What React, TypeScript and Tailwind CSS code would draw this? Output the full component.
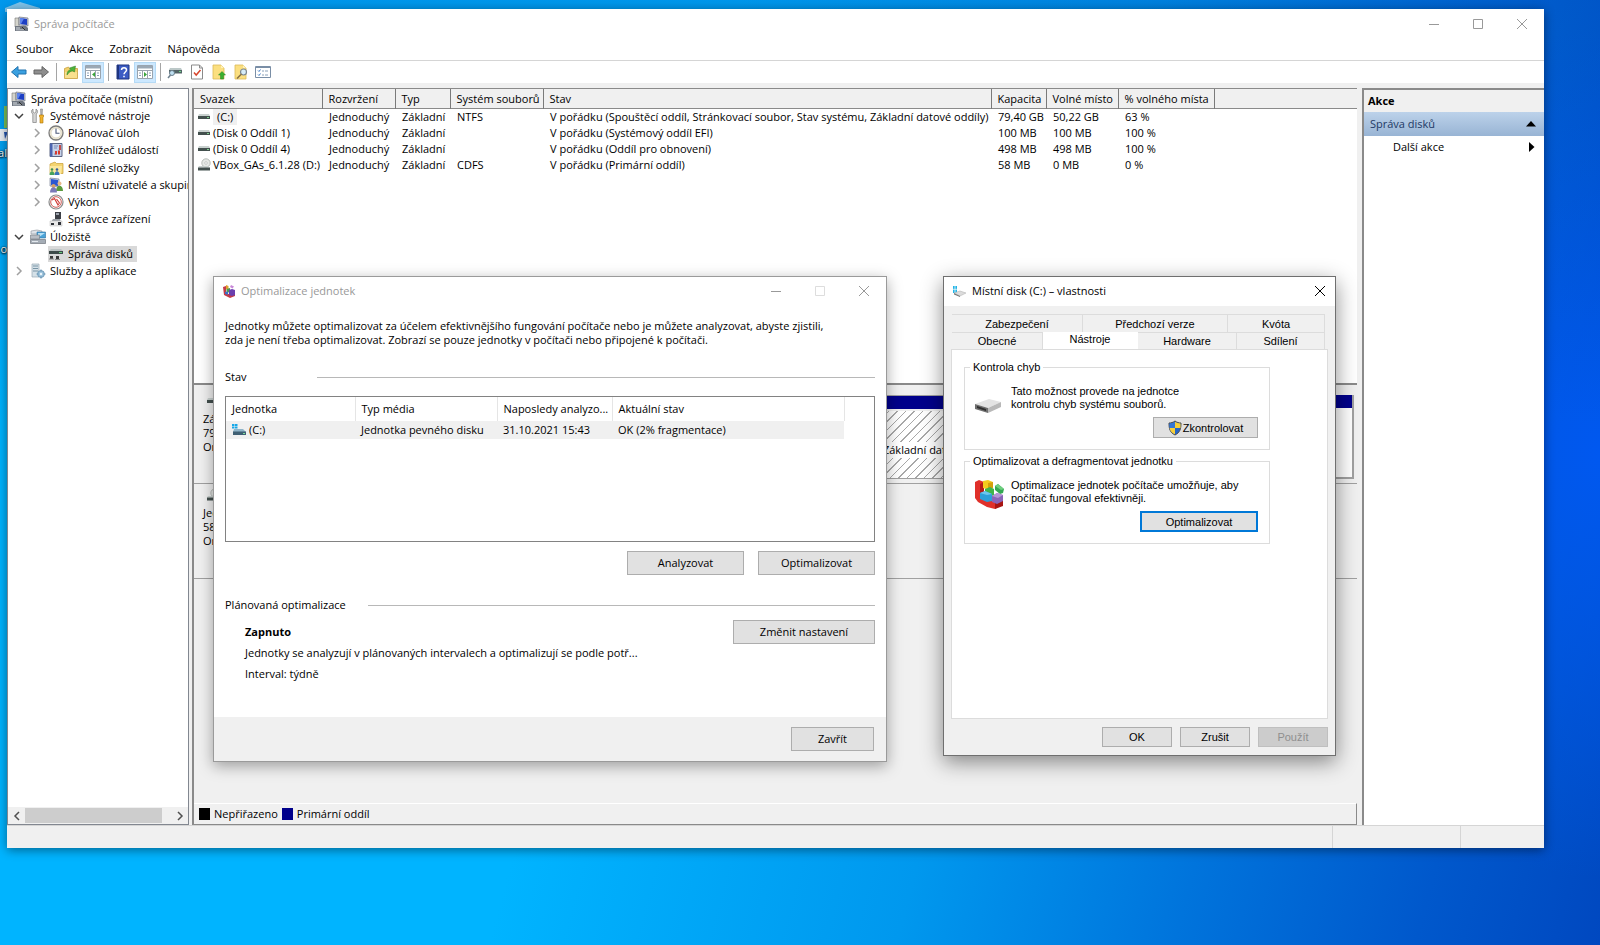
import type { ReactNode } from "react";
import clsx from "clsx";

/* ---------- icons ---------- */

function ComputerIcon() {
  return (
    <svg width="16" height="16" viewBox="0 0 16 16">
      <path d="M1 2h4v9H1z" fill="#d4d4cc" stroke="#777" strokeWidth=".6" />
      <path d="M5 1l9 1v8l-9-1z" fill="#c9cdd6" stroke="#5b6172" strokeWidth=".6" />
      <path d="M6 2l7 1v6L6 8z" fill="#1d3fc4" />
      <path d="M6 2l4 .6L7 8H6z" fill="#5f86ee" />
      <path d="M1 10h11l2 2v3H1z" fill="#6f7680" />
      <path d="M2 11.500h4v1H2zM2 13.500h9v.8H2z" fill="#d9dde2" />
      <path d="M8 11l3 3" stroke="#2b2b2b" />
    </svg>
  );
}

function ToolsIcon() {
  return (
    <svg width="16" height="16" viewBox="0 0 16 16">
      <path d="M3 1v3l1.500 1L6 4V1c2 1 2 4 .3 5v8.500H2.800V6C1 5 1 2 3 1z" fill="#d5d5d5" stroke="#808080" strokeWidth=".7" />
      <path d="M10.500 1h2l-.3 6h-1.400z" fill="#b5b5b5" stroke="#777" strokeWidth=".5" />
      <path d="M9.500 7h4v2l-.5.5V15h-3V9.500L9.500 9z" fill="#f1b22d" stroke="#a87407" strokeWidth=".6" />
    </svg>
  );
}

function ClockIcon() {
  return (
    <svg width="16" height="16" viewBox="0 0 16 16">
      <circle cx="8" cy="8" r="7" fill="#efe9d6" stroke="#7b7b7b" strokeWidth="1.300" />
      <circle cx="8" cy="8" r="5" fill="#fff" stroke="#d8d2bd" strokeWidth=".8" />
      <path d="M8 3.500V8.300H11.500" fill="none" stroke="#4b587a" strokeWidth="1.100" />
    </svg>
  );
}

function EventIcon() {
  return (
    <svg width="16" height="16" viewBox="0 0 16 16">
      <path d="M2 1.500h12v13H2z" fill="#c5d2ea" stroke="#5d6785" />
      <path d="M2 1.500h2.500v13H2z" fill="#4c64b0" />
      <path d="M6 4h4M6 6h3M6 12h2" stroke="#7889b5" />
      <path d="M10 8.500h2v4h-2zM7 9h2v3.500H7z" fill="#d63b2f" />
      <path d="M11 3h2v5h-2z" fill="#c14d4d" />
    </svg>
  );
}

function SharedFolderIcon() {
  return (
    <svg width="16" height="16" viewBox="0 0 16 16">
      <path d="M2 4l5-2 1.500 1.500H15v10H2z" fill="#f4d471" stroke="#c79d34" strokeWidth=".7" />
      <path d="M2 6h12l-1 8H2z" fill="#fbe79d" />
      <circle cx="4" cy="9.500" r="1.300" fill="#3e8b4d" />
      <path d="M1.500 15c0-5 5-5 5 0z" fill="#47a25a" />
      <circle cx="9" cy="9.500" r="1.300" fill="#345f9c" />
      <path d="M6.500 15c0-5 5-5 5 0z" fill="#3c75bb" />
    </svg>
  );
}

function UsersIcon() {
  return (
    <svg width="16" height="16" viewBox="0 0 16 16">
      <path d="M2 1l9 1v8l-9-1z" fill="#cfd5e2" stroke="#636c85" strokeWidth=".6" />
      <path d="M3 2l7 1v6L3 8z" fill="#2b57d2" />
      <circle cx="11.500" cy="6.500" r="2" fill="#e7b98d" />
      <path d="M8 14c0-7 7-7 7 0z" fill="#5b9a3d" />
      <circle cx="5.500" cy="9" r="2" fill="#d9a066" />
      <path d="M2 15.500c0-7 7-7 7 0z" fill="#7a79b8" />
    </svg>
  );
}

function PerformanceIcon() {
  return (
    <svg width="16" height="16" viewBox="0 0 16 16">
      <circle cx="8" cy="8" r="7" fill="#fff" stroke="#8a8a8a" strokeWidth="1.200" />
      <circle cx="8" cy="8" r="5.300" fill="#fff" stroke="#cf5a56" />
      <path d="M4 6l2.500-1.500L10 11l1.500-2M8.500 5l3 4" fill="none" stroke="#cf3a36" strokeWidth="1.200" />
    </svg>
  );
}

function DeviceIcon() {
  return (
    <svg width="16" height="16" viewBox="0 0 16 16">
      <path d="M7 1h6v7H7z" fill="#3c3f46" />
      <path d="M8 2h3v2H8z" fill="#9da3ad" />
      <path d="M5 8h7l1 3H3z" fill="#9aa0a6" />
      <path d="M2 10h12v5H2z" fill="#e9e9e9" stroke="#bbb" strokeWidth=".5" />
      <path d="M3 12h3v2H3zM10 11h3v3h-3z" fill="#2d3036" />
    </svg>
  );
}

function StorageIcon() {
  return (
    <svg width="16" height="16" viewBox="0 0 16 16">
      <path d="M1 2l6-1 5 1v3H1z" fill="#dfe3e8" stroke="#8c929a" strokeWidth=".6" />
      <path d="M7 3h8.500v6H7z" fill="#4aa3d8" stroke="#2c6f9d" strokeWidth=".6" />
      <path d="M8 4h7l-6 4H8z" fill="#b6e0f6" />
      <path d="M.5 6h9v4h-9z" fill="#b8bdc4" stroke="#747a82" strokeWidth=".6" />
      <path d="M.5 10.500h15v4H.5z" fill="#a5adb6" stroke="#5f666e" strokeWidth=".6" />
      <path d="M2 12h6v1H2z" fill="#e4e9ee" />
    </svg>
  );
}

function DiskToolIcon() {
  return (
    <svg width="16" height="16" viewBox="0 0 16 16">
      <path d="M3 3h10l2 2H1z" fill="#bcc3c3" />
      <path d="M1 5h14v3H1z" fill="#3d4a49" />
      <path d="M11 6h3v1h-3z" fill="#64c97a" />
      <path d="M2 10h3v3H2zM8 10h3v3H8z" fill="#3a3a3a" />
      <path d="M1 13h5M7 13.500h5" stroke="#888" />
    </svg>
  );
}

function ServicesIcon() {
  return (
    <svg width="16" height="16" viewBox="0 0 16 16">
      <path d="M2 1h7v13H2z" fill="#d5e1e8" stroke="#9aabb5" strokeWidth=".7" />
      <path d="M3 3h5M3 5.500h5M3 8h5" stroke="#7894a5" />
      <circle cx="11" cy="11" r="3.400" fill="#9cc3dc" stroke="#6d97b5" strokeWidth=".9" />
      <circle cx="11" cy="11" r="1.200" fill="#eef6fb" />
      <path d="M11 6.500v2M11 13.500v2M6.500 11h2M13.500 11h2" stroke="#6d97b5" strokeWidth="1.200" />
    </svg>
  );
}

function VolumeIcon() {
  return (
    <svg width="14" height="14" viewBox="0 0 14 14" className="shrink-0">
      <path d="M2 4h10l1 2H1z" fill="#c9d1cf" />
      <path d="M1 6h12v3H1z" fill="#43504e" />
      <path d="M10 7h2v1h-2z" fill="#7fd28f" />
    </svg>
  );
}

function CdIcon() {
  return (
    <svg width="14" height="14" viewBox="0 0 14 14" className="shrink-0">
      <circle cx="9" cy="5" r="4.200" fill="#e6e9e6" stroke="#a9afab" strokeWidth=".8" />
      <circle cx="9" cy="5" r="1.300" fill="#fff" stroke="#a9afab" strokeWidth=".6" />
      <path d="M2 8h9l2 1.500H1z" fill="#c9d1cf" />
      <path d="M1 9.500h12v3H1z" fill="#43504e" />
    </svg>
  );
}

function WinDriveIcon() {
  return (
    <svg width="16" height="14" viewBox="0 0 16 14">
      <path d="M1 1h2.500v2H1zM4 1h2.500v2H4zM1 3.500h2.500v2H1zM4 3.500h2.500v2H4z" fill="#18a8e8" />
      <path d="M3 6h9l3 3H2z" fill="#8fb4c8" />
      <path d="M2 8.500h13V12H2z" fill="#3f5f73" />
      <path d="M12 10h2v1h-2z" fill="#7fe09a" />
    </svg>
  );
}

function LocalDiskIcon() {
  return (
    <svg width="14" height="14" viewBox="0 0 14 14">
      <path d="M1 2h4v7H1z" fill="#22b4e6" />
      <path d="M1 5.300h4M3 2v7" stroke="#fff" strokeWidth=".7" />
      <path d="M2 9l6-2 6 2-6 3z" fill="#dcdcdc" stroke="#aaa" strokeWidth=".5" />
      <path d="M2 9l6 3v1L2 10.500z" fill="#777" />
    </svg>
  );
}

function DriveIcon() {
  return (
    <svg width="28" height="16" viewBox="0 0 28 16">
      <path d="M1 6L15 1l12 3-13 6z" fill="#e3e3e3" />
      <path d="M14 10l13-6v5l-13 6z" fill="#b8b8b8" />
      <path d="M1 6l13 4v5L1 11z" fill="#6e6e6e" />
      <path d="M3 8l9 3v2L3 10z" fill="#2f2f2f" />
    </svg>
  );
}

function DefragIcon({ size }: { size: number }) {
  return (
    <svg width={size} height={size} viewBox="0 0 30 30">
      <path d="M1 3l4-2 5 2v16l10 3 8-2v6l-7 4-8-2-9-5-3-4z" fill="#e0302a" />
      <path d="M6 5l4-2v16l-4 1z" fill="#b51b17" />
      <path d="M21 24l8-3v6l-8 3z" fill="#a81513" />
      <path d="M9 2l5-1 5 2v6l-4 2-6-2z" fill="#f4cb1e" />
      <path d="M14 4l5-1v6l-5 2z" fill="#d3a00c" />
      <path d="M21 7l3-2 6 5-1 4-3 1-5-4z" fill="#34a853" />
      <path d="M21 7l3-2 6 5-3 1z" fill="#6fcf80" />
      <path d="M11 10l5-2 4 2v6l-4 2-5-2z" fill="#3fb54a" />
      <path d="M6 14l5-2 7 3v7l-5 1-7-3z" fill="#2c9fd9" />
      <path d="M6 14l5-2 7 3-5 1z" fill="#6cc6ee" />
      <path d="M18 17l5-3 6 2v6l-6 3-5-2z" fill="#8a63b8" />
      <path d="M18 17l5-3 6 2-5 3z" fill="#b497d6" />
    </svg>
  );
}

/* the small caption variant is tinted violet */
function OptimizeIcon() {
  return (
    <svg width="14" height="14" viewBox="0 0 14 14">
      <path d="M1 3l3-1v7l6 2 3-1v2l-5 2-6-3z" fill="#c23b48" />
      <path d="M4 1l2.500 1v4L4 5z" fill="#e0a32c" />
      <path d="M9 1l3 1.500-1.500 2L8 3z" fill="#c988d8" />
      <path d="M4.500 5L8 4v4l-3.500 1z" fill="#4f9a52" />
      <path d="M7 6l3-1 3 1v5l-3 1-3-1z" fill="#6a3fae" />
      <path d="M3 8l3-.5V11l-3-1.200z" fill="#3b6fc9" />
    </svg>
  );
}

function ShieldIcon() {
  return (
    <svg width="14" height="16" viewBox="0 0 14 16">
      <path d="M7 1c2 1.500 4 2 6 2 0 6-1 9.500-6 12C2 12.500 1 9 1 3c2 0 4-.5 6-2z" fill="#2565c7" stroke="#4c4c4c" />
      <path d="M7 1.800V8H1.500C1.300 6.500 1.500 5 1.500 3.500 3.500 3.400 5.500 2.800 7 1.800z" fill="#3577d4" />
      <path d="M7 1.800V8h5.500c.2-1.500 0-3 0-4.500C10.500 3.400 8.500 2.800 7 1.800z" fill="#f8cf37" />
      <path d="M7 14.300V8H1.600c.6 3 2 5 5.400 6.300z" fill="#f8cf37" />
    </svg>
  );
}

function ArrowIcon({ back }: { back?: boolean }) {
  return (
    <svg width="18" height="16" viewBox="0 0 18 16">
      {back ? (
        <path d="M1.500 8l6.500-5.500V6h8v4H8v3.500z" fill="#3aa0e0" stroke="#2172ae" />
      ) : (
        <path d="M16.500 8L10 2.500V6H2v4h8v3.500z" fill="#8e8e8e" stroke="#636363" />
      )}
    </svg>
  );
}

function FolderUpIcon() {
  return (
    <svg width="16" height="16" viewBox="0 0 16 16">
      <path d="M1.500 4.500l4-1.500 1 1.500h8v10h-13z" fill="#f1cf6b" stroke="#c9a13f" strokeWidth=".8" />
      <path d="M2 8h12v6H2z" fill="#f9e08e" />
      <path d="M4 11c0-4 2-5 4-5.500L6.500 4l6-2-1 6-1.800-1C8 7 6 8 4 11z" fill="#4eb33a" stroke="#2f7d22" strokeWidth=".5" />
    </svg>
  );
}

function PaneIcon({ flip }: { flip?: boolean }) {
  return (
    <svg width="18" height="16" viewBox="0 0 18 16">
      <path d="M1.500 1.500h15v13h-15z" fill="#fff" stroke="#9aa4ae" />
      <path d="M2 2h14v2.500H2z" fill="#9aa8b5" />
      <path d="M2 6.500h14M6.500 7v7M11.500 7v7" stroke="#9aa4ae" />
      <path d="M3 9h2M3 11.500h2M13 9h2M13 11.500h2" stroke="#8aa0b8" />
      <path d={flip ? "M8 8l3 2.500-3 2.500z" : "M11 8l-3 2.500 3 2.500z"} fill="#3aa53a" />
    </svg>
  );
}

function HelpIcon() {
  return (
    <svg width="14" height="16" viewBox="0 0 14 16">
      <path d="M1 1h12v14H1z" fill="#3c5cc4" stroke="#1e3580" />
      <path d="M1 1h2v14H1z" fill="#1e3580" />
      <path d="M5.500 6c0-3 5-3 5 0 0 2-2.500 2-2.500 4.300M8 11.800v1.400" fill="none" stroke="#fff" strokeWidth="1.500" />
    </svg>
  );
}

function DriveKeyIcon() {
  return (
    <svg width="18" height="16" viewBox="0 0 18 16">
      <path d="M4 4h11l1 2H3z" fill="#bcc8c8" />
      <path d="M3 6h13v3.500H3z" fill="#526466" />
      <path d="M13 7h2v1h-2z" fill="#71d487" />
      <circle cx="6" cy="9" r="2.500" fill="#bfe0f2" stroke="#6c7f8c" />
      <path d="M4.500 11L2 14" stroke="#6c7f8c" strokeWidth="1.500" />
    </svg>
  );
}

function DocCheckIcon() {
  return (
    <svg width="14" height="16" viewBox="0 0 14 16">
      <path d="M1.500 1h8l3 3v11h-11z" fill="#fff" stroke="#8a8a8a" />
      <path d="M9.500 1v3h3" fill="none" stroke="#8a8a8a" />
      <path d="M4 8.500l2.200 2.500L10.500 6" fill="none" stroke="#d8452c" strokeWidth="1.500" />
    </svg>
  );
}

function PageIcon({ search }: { search?: boolean }) {
  return (
    <svg width="16" height="16" viewBox="0 0 16 16">
      <path d="M2 1h8l3 3v11H2z" fill="#fbdf80" stroke="#dcb957" strokeWidth=".8" />
      <path d="M10 1v3h3z" fill="#fff1b8" />
      {search ? (
        <>
          <circle cx="10.500" cy="8" r="3" fill="#d6ecf8" stroke="#7b8792" strokeWidth="1.200" />
          <path d="M8.500 10L4 14.500" stroke="#8a7343" strokeWidth="1.600" />
        </>
      ) : (
        <path d="M11 7.500l3.500 3.500h-2v4h-3v-4h-2z" fill="#39b02f" stroke="#258020" strokeWidth=".5" />
      )}
    </svg>
  );
}

function ListIcon() {
  return (
    <svg width="16" height="14" viewBox="0 0 16 14">
      <path d="M.5 1.500h15v11H.5z" fill="#fff" stroke="#7a8ea6" />
      <path d="M1 2h14v1H1z" fill="#7a8ea6" />
      <path d="M3 5.500l1 1 1.500-2M3 9.500l1 1 1.500-2" fill="none" stroke="#3c79c4" />
      <path d="M7 6h2M10 6h3M7 10h2M10 10h3" stroke="#8aa0b8" />
    </svg>
  );
}

function Chevron({ dir }: { dir: "down" | "right" | "left" }) {
  const d = { down: "M1 3l4 4 4-4", right: "M3 1l4 4-4 4", left: "M7 1L3 5l4 4" }[dir];
  return (
    <svg width="10" height="10" viewBox="0 0 10 10" fill="none">
      <path d={d} stroke="currentColor" strokeWidth="1.500" />
    </svg>
  );
}

/* ---------- shared window parts ---------- */

function CaptionButton({ kind, className }: { kind: "min" | "max" | "close"; className?: string }) {
  const d = {
    min: "M1 6.500h10",
    max: "M1.500 1.500h9v9h-9z",
    close: "M1 1l10 10M11 1L1 11",
  }[kind];
  return (
    <button aria-label={kind} className={clsx("h-full flex items-center justify-center", className)}>
      <svg width="12" height="12" viewBox="0 0 12 12" fill="none">
        <path d={d} stroke="currentColor" />
      </svg>
    </button>
  );
}

function PushButton({ children, className, disabled }: { children: ReactNode; className?: string; disabled?: boolean }) {
  return (
    <button
      disabled={disabled}
      className={clsx(
        "flex items-center justify-center border",
        disabled ? "bg-[#cccccc] border-[#bfbfbf] text-[#8f8f8f]" : "bg-[#e1e1e1] border-[#adadad]",
        className
      )}
    >
      {children}
    </button>
  );
}

/* ---------- computer management ---------- */

const menu = ["Soubor", "Akce", "Zobrazit", "Nápověda"];

interface TreeNode {
  label: string;
  icon: ReactNode;
  level: number;
  state?: "open" | "closed";
  selected?: boolean;
}

const tree: TreeNode[] = [
  { label: "Správa počítače (místní)", icon: <ComputerIcon />, level: 0 },
  { label: "Systémové nástroje", icon: <ToolsIcon />, level: 1, state: "open" },
  { label: "Plánovač úloh", icon: <ClockIcon />, level: 2, state: "closed" },
  { label: "Prohlížeč událostí", icon: <EventIcon />, level: 2, state: "closed" },
  { label: "Sdílené složky", icon: <SharedFolderIcon />, level: 2, state: "closed" },
  { label: "Místní uživatelé a skupiny", icon: <UsersIcon />, level: 2, state: "closed" },
  { label: "Výkon", icon: <PerformanceIcon />, level: 2, state: "closed" },
  { label: "Správce zařízení", icon: <DeviceIcon />, level: 2 },
  { label: "Úložiště", icon: <StorageIcon />, level: 1, state: "open" },
  { label: "Správa disků", icon: <DiskToolIcon />, level: 2, selected: true },
  { label: "Služby a aplikace", icon: <ServicesIcon />, level: 1, state: "closed" },
];

const volumeColumns = [
  { label: "Svazek", width: "w-[128px]" },
  { label: "Rozvržení", width: "w-[73px]" },
  { label: "Typ", width: "w-[55px]" },
  { label: "Systém souborů", width: "w-[93px]" },
  { label: "Stav", width: "w-[448px]" },
  { label: "Kapacita", width: "w-[55px]" },
  { label: "Volné místo", width: "w-[72px]" },
  { label: "% volného místa", width: "w-[96px]" },
];

const volumes = [
  {
    name: "(C:)",
    cells: ["Jednoduchý", "Základní", "NTFS", "V pořádku (Spouštěcí oddíl, Stránkovací soubor, Stav systému, Základní datové oddíly)", "79,40 GB", "50,22 GB", "63 %"],
    selected: true,
  },
  { name: "(Disk 0 Oddíl 1)", cells: ["Jednoduchý", "Základní", "", "V pořádku (Systémový oddíl EFI)", "100 MB", "100 MB", "100 %"] },
  { name: "(Disk 0 Oddíl 4)", cells: ["Jednoduchý", "Základní", "", "V pořádku (Oddíl pro obnovení)", "498 MB", "498 MB", "100 %"] },
  { name: "VBox_GAs_6.1.28 (D:)", cells: ["Jednoduchý", "Základní", "CDFS", "V pořádku (Primární oddíl)", "58 MB", "0 MB", "0 %"], cd: true },
];

function Toolbar() {
  const sep = <span className="w-2 flex justify-center"><span className="w-px h-[18px] bg-[#a5a5a5]" /></span>;
  const item = (label: string, icon: ReactNode, active?: boolean) => (
    <button
      aria-label={label}
      className={clsx("w-[22px] h-[21px] flex items-center justify-center shrink-0", active && "bg-[#cce8ff] border border-[#b5daf5]")}
    >
      {icon}
    </button>
  );
  return (
    <div className="h-[22px] flex items-center pl-px bg-white">
      {item("Zpět", <ArrowIcon back />)}
      {item("Vpřed", <ArrowIcon />)}
      {sep}
      {item("O úroveň výš", <FolderUpIcon />)}
      {item("Strom konzoly", <PaneIcon />, true)}
      {sep}
      {item("Nápověda", <HelpIcon />)}
      {item("Podokno akcí", <PaneIcon flip />, true)}
      {sep}
      {item("Připojit", <DriveKeyIcon />)}
      {item("Vlastnosti", <DocCheckIcon />)}
      {item("Exportovat", <PageIcon />)}
      {item("Najít", <PageIcon search />)}
      {item("Zobrazení", <ListIcon />)}
    </div>
  );
}

function ConsoleTree() {
  return (
    <nav className="w-[182px] shrink-0 flex flex-col bg-white border border-[#828790] overflow-hidden">
      <ul className="h-[190px] mt-px flex flex-col">
        {tree.map((node) => (
          <li
            key={node.label}
            className={clsx(
              "flex-1 min-h-0 flex items-center whitespace-nowrap",
              node.level === 0 && "pl-[3px]",
              node.level === 1 && "pl-[6px]",
              node.level === 2 && "pl-6"
            )}
          >
            {node.level > 0 && (
              <span className={clsx("w-4 shrink-0", node.state === "open" ? "text-[#404040]" : "text-[#a0a0a0]")}>
                {node.state && <Chevron dir={node.state === "open" ? "down" : "right"} />}
              </span>
            )}
            <span className={clsx("flex items-center", node.selected && "bg-[#d9d9d9]")}>
              <span className="w-4 mr-1 flex shrink-0 justify-center">{node.icon}</span>
              <span className="pr-1">{node.label}</span>
            </span>
          </li>
        ))}
      </ul>
      <div className="mt-auto h-[17px] flex items-center bg-[#f0f0f0] text-[#505050]">
        <button aria-label="Posunout vlevo" className="w-[17px] flex justify-center"><Chevron dir="left" /></button>
        <div className="w-[137px] h-[15px] bg-[#cdcdcd]" />
        <button aria-label="Posunout vpravo" className="ml-auto w-[17px] flex justify-center"><Chevron dir="right" /></button>
      </div>
    </nav>
  );
}

function VolumeTable() {
  return (
    <div className="h-[296px] bg-white border-b-2 border-[#8a8a8a] overflow-hidden">
      <table className="w-full table-fixed border-collapse text-left whitespace-nowrap">
        <thead>
          <tr className="h-[19px] bg-[#f0f0f0] border-b border-[#8a8a8a]">
            {volumeColumns.map((col) => (
              <th key={col.label} className={clsx("px-[6px] pt-[2px] font-normal leading-4 border-r border-[#7a7a7a]", col.width)}>{col.label}</th>
            ))}
            <td />
          </tr>
        </thead>
        <tbody>
          {volumes.map((vol) => (
            <tr key={vol.name} className="h-4">
              <td className="pl-[3px] leading-4">
                <span className="flex items-center gap-[2px]">
                  {vol.cd ? <CdIcon /> : <VolumeIcon />}
                  <span className={clsx(vol.selected && "bg-[#f0f0f0] px-1")}>{vol.name}</span>
                </span>
              </td>
              {vol.cells.map((cell, i) => (
                <td key={i} className="pl-[7px] leading-4">{cell}</td>
              ))}
            </tr>
          ))}
        </tbody>
      </table>
    </div>
  );
}

function DiskLabel({ icon, lines }: { icon: ReactNode; lines: string[] }) {
  return (
    <div className="w-[110px] shrink-0 pl-[9px] leading-[14px] border-r border-[#a0a0a0]">
      <div className="pl-[3px] h-[22px] pt-1">{icon}</div>
      {lines.map((line) => (
        <div key={line}>{line}</div>
      ))}
    </div>
  );
}

function DiskMap() {
  return (
    <div className="flex-1 flex flex-col min-h-0">
      <div className="h-[94px] mt-[5px] flex border-b border-[#a0a0a0]">
        <DiskLabel icon={<VolumeIcon />} lines={["Základní", "79,98 GB", "Online"]} />
        <div className="flex-1 min-w-0 flex gap-px pt-[5px] pr-[3px]">
          <div className="w-[243px] h-[84px] border border-[#a0a0a0] bg-white"><div className="h-[13px] bg-[#00008b]" /></div>
          <div className="flex-1 h-[84px] border border-[#a0a0a0] flex flex-col">
            <div className="h-[13px] bg-[#00008b]" />
            <div className="mt-[2px] flex-1 flex items-center pt-[10px] pl-[14px] whitespace-nowrap bg-[repeating-linear-gradient(135deg,#a8a8a8_0px,#a8a8a8_1px,#fff_1px,#fff_6px)]">
              <span className="bg-white">V pořádku (Spouštěcí oddíl, Stránkovací soubor, Stav systému, Základní datové oddíly)</span>
            </div>
          </div>
          <div className="w-[240px] h-[84px] border-r-2 border-b-2 border-[#a0a0a0] bg-white"><div className="h-[13px] bg-[#00008b]" /></div>
        </div>
      </div>
      <div className="h-[95px] flex border-b border-[#a0a0a0]">
        <DiskLabel icon={<CdIcon />} lines={["Jednotka CD", "58 MB", "Online"]} />
      </div>
      <div className="mt-auto h-[21px] flex items-center gap-[4px] pl-[5px] border-t border-white border-r border-r-[#8a8a8a]">
        <span className="w-[11px] h-3 bg-black" />
        <span>Nepřiřazeno</span>
        <span className="w-[11px] h-3 bg-[#00008b]" />
        <span>Primární oddíl</span>
      </div>
    </div>
  );
}

function ActionsPane() {
  return (
    <aside className="w-[182px] shrink-0 bg-white border-l-2 border-t-2 border-[#8a8a8a]">
      <h2 className="h-[22px] px-1 flex items-center font-bold bg-[#f0f0f0]">Akce</h2>
      <button className="w-full h-6 pl-[6px] pr-2 flex items-center justify-between text-[#1e3a66] bg-linear-to-b from-[#bcd2ea] to-[#98b4d4]">
        Správa disků
        <svg width="10" height="6" viewBox="0 0 10 6"><path d="M0 5.500L5 0l5 5.500z" fill="#000" /></svg>
      </button>
      <button className="w-full h-[22px] pl-[29px] pr-[9px] flex items-center justify-between">
        Další akce
        <svg width="6" height="10" viewBox="0 0 6 10"><path d="M0 0l5.500 5L0 10z" fill="#000" /></svg>
      </button>
    </aside>
  );
}

function ManagementWindow() {
  return (
    <section className="absolute left-[7px] right-14 top-[9px] bottom-[97px] flex flex-col bg-[#f0f0f0] shadow-[0_2px_10px_rgba(0,0,0,0.45)]">
      <header className="h-[29px] pl-[7px] flex items-center bg-white text-[#999999]">
        <ComputerIcon />
        <h1 className="ml-1">Správa počítače</h1>
        <div className="ml-auto h-full flex">
          <CaptionButton kind="min" className="w-11" />
          <CaptionButton kind="max" className="w-11" />
          <CaptionButton kind="close" className="w-11" />
        </div>
      </header>
      <div className="h-[23px] pl-px flex items-center bg-white border-b border-[#d5d5d5]">
        {menu.map((name) => (
          <button key={name} className="px-2">{name}</button>
        ))}
      </div>
      <Toolbar />
      <div className="flex-1 min-h-0 flex pt-[5px]">
        <ConsoleTree />
        <main className="ml-[3px] flex-1 min-w-0 flex flex-col border-l-2 border-t border-b border-[#8a8a8a]">
          <VolumeTable />
          <DiskMap />
        </main>
        <div className="w-[5px] shrink-0" />
        <ActionsPane />
      </div>
      <footer className="h-[23px] flex justify-end border-t border-[#d5d5d5]">
        <span className="w-32 border-l border-[#d5d5d5]" />
        <span className="w-[84px] border-l border-[#d5d5d5]" />
      </footer>
    </section>
  );
}

/* ---------- optimize drives ---------- */

const driveColumns = [
  { label: "Jednotka", width: "w-[129px]" },
  { label: "Typ média", width: "w-[142px]" },
  { label: "Naposledy analyzo...", width: "w-[115px]" },
  { label: "Aktuální stav", width: "w-[232px]" },
];

function OptimizeDialog() {
  return (
    <section className="absolute left-[213px] top-[276px] w-[674px] h-[486px] flex flex-col bg-white border border-[#9a9a9a] shadow-[0_4px_14px_rgba(0,0,0,0.35)]">
      <header className="h-7 pl-2 flex items-center text-[#999999]">
        <OptimizeIcon />
        <h2 className="ml-[5px]">Optimalizace jednotek</h2>
        <div className="ml-auto h-full flex">
          <CaptionButton kind="min" className="w-11" />
          <CaptionButton kind="max" className="w-11 text-[#dddddd]" />
          <CaptionButton kind="close" className="w-11" />
        </div>
      </header>
      <div className="px-[11px] pt-[14px] leading-[14px]">
        <p>
          Jednotky můžete optimalizovat za účelem efektivnějšího fungování počítače nebo je můžete analyzovat, abyste zjistili,
          <br />
          zda je není třeba optimalizovat. Zobrazí se pouze jednotky v počítači nebo připojené k počítači.
        </p>
        <div className="mt-[23px] flex items-center">
          <h3 className="w-[92px]">Stav</h3>
          <span className="flex-1 h-px bg-[#b8b8b8]" />
        </div>
        <div className="mt-3 h-[146px] border border-[#828282]">
          <table className="table-fixed w-[618px] border-collapse text-left whitespace-nowrap">
            <thead>
              <tr className="h-6">
                {driveColumns.map((col) => (
                  <th key={col.label} className={clsx("pl-[6px] font-normal border-r border-[#e5e5e5]", col.width)}>{col.label}</th>
                ))}
              </tr>
            </thead>
            <tbody>
              <tr className="h-[18px] bg-[#f0f0f0]">
                <td className="pl-[5px]">
                  <span className="flex items-center gap-[2px]"><WinDriveIcon />(C:)</span>
                </td>
                <td className="pl-[6px]">Jednotka pevného disku</td>
                <td className="pl-[6px]">31.10.2021 15:43</td>
                <td className="pl-[6px]">OK (2% fragmentace)</td>
              </tr>
            </tbody>
          </table>
        </div>
        <div className="mt-[9px] flex justify-end gap-[14px]">
          <PushButton className="w-[117px] h-6">Analyzovat</PushButton>
          <PushButton className="w-[117px] h-6">Optimalizovat</PushButton>
        </div>
        <div className="mt-[23px] flex items-center">
          <h3 className="w-[143px]">Plánovaná optimalizace</h3>
          <span className="flex-1 h-px bg-[#b8b8b8]" />
        </div>
        <div className="mt-2 flex items-start justify-between">
          <div className="pl-5 pt-[5px] flex flex-col gap-[7px]">
            <strong>Zapnuto</strong>
            <span>Jednotky se analyzují v plánovaných intervalech a optimalizují se podle potř...</span>
            <span>Interval: týdně</span>
          </div>
          <PushButton className="w-[142px] h-6">Změnit nastavení</PushButton>
        </div>
      </div>
      <footer className="mt-auto h-11 pr-3 flex items-center justify-end bg-[#f0f0f0]">
        <PushButton className="w-[83px] h-6">Zavřít</PushButton>
      </footer>
    </section>
  );
}

/* ---------- drive properties ---------- */

const tabRows = [
  [
    { label: "Zabezpečení", width: "w-[131px]" },
    { label: "Předchozí verze", width: "w-[145px]" },
    { label: "Kvóta", width: "w-[97px]" },
  ],
  [
    { label: "Obecné", width: "w-[91px]" },
    { label: "Nástroje", width: "w-[95px]" },
    { label: "Hardware", width: "w-[99px]" },
    { label: "Sdílení", width: "w-[88px]" },
  ],
];

function ToolGroup({ title, icon, lines, children }: { title: string; icon: ReactNode; lines: string[]; children: ReactNode }) {
  return (
    <fieldset className="w-[306px] h-[89px] mb-[5px] border border-[#dcdcdc]">
      <legend className="ml-[5px] px-[3px] leading-3">{title}</legend>
      <div className="pt-3 pl-[9px] flex h-[38px]">
        <span className="w-[37px] shrink-0 flex justify-start items-start">{icon}</span>
        <p className="leading-[13px] whitespace-nowrap">
          {lines[0]}
          <br />
          {lines[1]}
        </p>
      </div>
      <div className="mt-[6px] mr-[11px] flex justify-end">{children}</div>
    </fieldset>
  );
}

function PropertiesDialog() {
  return (
    <section className="absolute left-[943px] top-[276px] w-[393px] h-[480px] flex flex-col bg-[#f0f0f0] border border-[#6f6f6f] shadow-[0_6px_20px_rgba(0,0,0,0.45)]">
      <header className="h-[29px] pl-2 pb-[2px] flex items-center bg-white">
        <LocalDiskIcon />
        <h2 className="ml-[6px]">Místní disk (C:) – vlastnosti</h2>
        <CaptionButton kind="close" className="ml-auto w-[30px]" />
      </header>
      <div className="flex-1 flex flex-col px-[7px] pt-2 font-['Liberation_Sans',Arial,sans-serif]">
        <div role="tablist" className="pl-px">
          {tabRows.map((row, i) => (
            <div key={i} className={clsx("flex", i === 0 ? "h-[18px]" : "h-[17px]")}>
              {row.map((tab) => {
                const active = tab.label === "Nástroje";
                return (
                  <button
                    key={tab.label}
                    role="tab"
                    aria-selected={active}
                    className={clsx(
                      "flex justify-center items-center border-t border-r",
                      tab.width,
                      active ? "bg-white border-white pb-1" : "bg-[#f0f0f0] border-[#dcdcdc]"
                    )}
                  >
                    {tab.label}
                  </button>
                );
              })}
            </div>
          ))}
        </div>
        <div role="tabpanel" className="flex-1 bg-white border border-[#dcdcdc] pt-[11px] pl-3">
          <ToolGroup
            title="Kontrola chyb"
            icon={<span className="pt-[13px]"><DriveIcon /></span>}
            lines={["Tato možnost provede na jednotce", "kontrolu chyb systému souborů."]}
          >
            <PushButton className="w-[105px] h-[21px] gap-px"><ShieldIcon />Zkontrolovat</PushButton>
          </ToolGroup>
          <ToolGroup
            title="Optimalizovat a defragmentovat jednotku"
            icon={<DefragIcon size={30} />}
            lines={["Optimalizace jednotek počítače umožňuje, aby", "počítač fungoval efektivněji."]}
          >
            <button className="w-[118px] h-[21px] flex items-center justify-center bg-[#e1e1e1] border-2 border-[#0078d7]">Optimalizovat</button>
          </ToolGroup>
        </div>
        <div className="py-2 flex justify-end gap-2">
          <PushButton className="w-[70px] h-5">OK</PushButton>
          <PushButton className="w-[70px] h-5">Zrušit</PushButton>
          <PushButton className="w-[70px] h-5" disabled>Použít</PushButton>
        </div>
      </div>
    </section>
  );
}

export default function App() {
  return (
    <div className="relative h-screen overflow-hidden text-black text-[11px] leading-4 font-['Open_Sans','Noto_Sans',sans-serif] bg-[linear-gradient(180deg,rgba(0,50,170,0.22)_0%,transparent_45%),radial-gradient(ellipse_20%_45%_at_100%_48%,#0058f0_0%,transparent_100%),linear-gradient(105deg,#00b4ff_0%,#00b4ff_40%,#0098ee_62%,#0074dc_77%,#0058cc_90%,#0048c0_100%)]">
      <svg className="absolute left-0 top-0" width="44" height="260" viewBox="0 0 44 260">
        <path d="M5 8L20 2l20 6v4H5z" fill="#9fd0ea" opacity=".8" />
        <path d="M4 106h4v22H4z" fill="#7cc45c" />
        <path d="M0 129h8v12H0z" fill="#e8eef5" />
        <path d="M4 132h4l-3 7z" fill="#2456b0" />
      </svg>
      <span className="absolute right-full top-[145px] -mr-[7px] text-white [text-shadow:0_0_2px_#000,0_1px_2px_#000]">al</span>
      <span className="absolute right-full top-[241px] -mr-[7px] text-white [text-shadow:0_0_2px_#000,0_1px_2px_#000]">o</span>
      <ManagementWindow />
      <OptimizeDialog />
      <PropertiesDialog />
    </div>
  );
}
